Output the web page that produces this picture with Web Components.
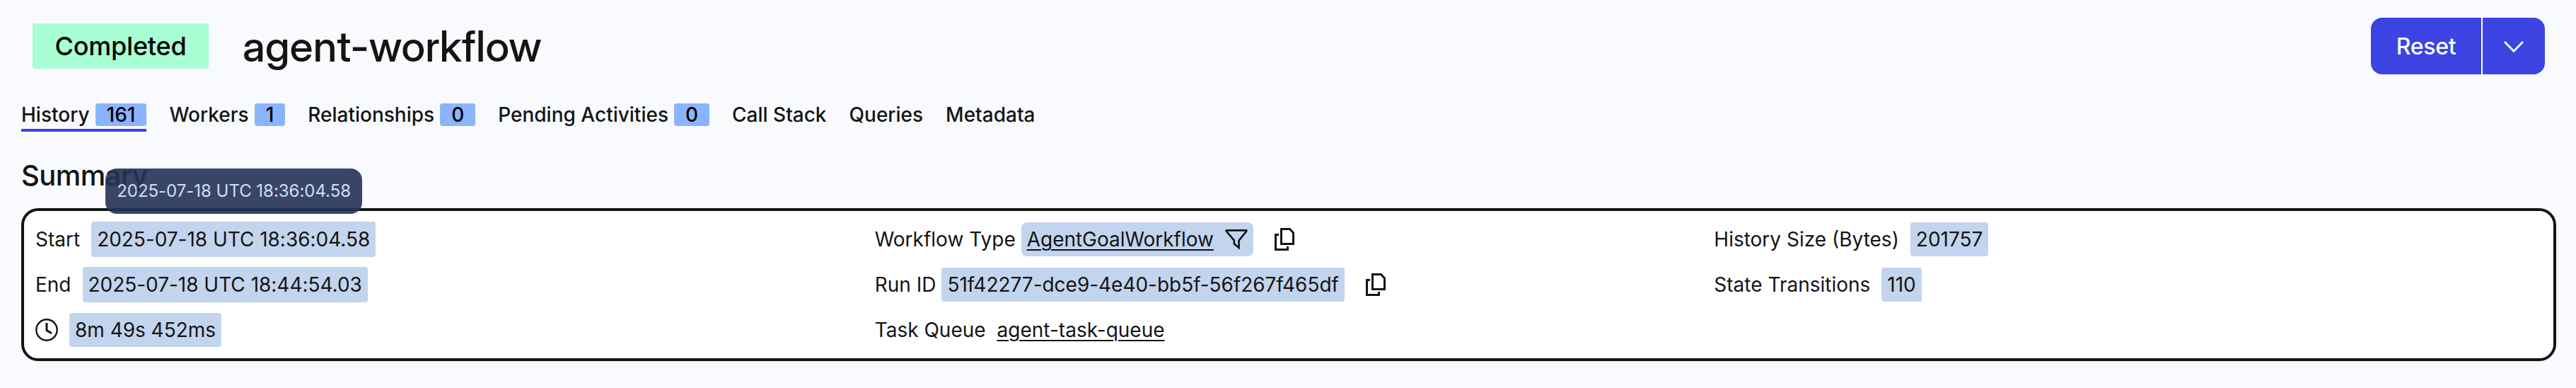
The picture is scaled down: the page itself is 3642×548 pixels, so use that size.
<!DOCTYPE html>
<html lang="en">
<head>
<meta charset="utf-8">
<title>agent-workflow</title>
<style>
html,body{margin:0;padding:0}
body{background:#f8fafd;width:3642px;height:548px;overflow:hidden;font-family:Inter,"Liberation Sans",sans-serif;color:#141414}
</style>
</head>
<body>
<workflow-page></workflow-page>
<script>
const define = (name, html) => {
  const tpl = document.createElement('template');
  tpl.innerHTML = html;
  customElements.define(name, class extends HTMLElement {
    constructor() {
      super();
      this.attachShadow({ mode: 'open' }).appendChild(tpl.content.cloneNode(true));
    }
  });
};

define('status-badge', `<style>
:host{display:flex;align-items:center;justify-content:center;box-sizing:border-box;width:249px;height:64px;border-radius:4px;background:#a7ffd3;color:#000;font-size:36px;font-weight:500;line-height:64px;letter-spacing:-.22px}
</style><slot></slot>`);

define('split-button', `<style>
:host{display:block;flex:none;height:80px;color:#fff;font-size:32px;font-weight:500;letter-spacing:-.3px}
.wrap{display:flex;gap:2px;background:linear-gradient(#fff,#fff) 156px 0/2px 100% no-repeat}
button{all:unset;box-sizing:border-box;display:flex;align-items:center;justify-content:center;background:#3c44e2;height:80px}
.main{width:156px;border-radius:16px 0 0 16px}
.more{width:88px;border-radius:0 16px 16px 0}
svg{display:block}
</style><div class="wrap"><button class="main"><slot></slot></button><button class="more" aria-label="More actions"><svg width="32" height="20" viewBox="0 0 32 20" fill="none" stroke="#fff" stroke-width="2.7"><path d="M3 4 16 17.3 29 4"/></svg></button></div>`);

define('count-badge', `<style>
:host{display:flex;align-items:center;justify-content:center;height:32px;border-radius:4px;background:#8ab4ff;color:#000;line-height:32px;padding:0 16px}
</style><slot></slot>`);

define('nav-tab', `<style>
:host{display:flex;align-items:center;gap:8px;box-sizing:border-box;height:40px;padding-bottom:4px;font-size:28px;font-weight:500;line-height:32px;border-bottom:4px solid transparent;white-space:nowrap}
:host([active]){border-bottom-color:#3c44e2}
</style><span><slot></slot></span><slot name="count"></slot>`);

define('copy-icon', `<style>:host{display:block;width:28px;height:32px}svg{display:block}</style>
<svg width="28" height="32" viewBox="0 0 28 32" fill="none" stroke="#141414" stroke-width="3"><path d="M9.5 1.5H21.5L26.5 6.8V22.5H9.5Z"/><path d="M6 9.5H1.5V30.5H18.5V26"/></svg>`);

define('filter-icon', `<style>:host{display:block;width:32px;height:32px}svg{display:block}</style>
<svg width="32" height="32" viewBox="0 0 32 32" fill="none" stroke="#141414" stroke-width="2.6"><path d="M1.8 3.4H30.2V4.6L19.6 17.6V28L12.9 22.3V17.6L1.8 4.6Z"/></svg>`);

define('clock-icon', `<style>:host{display:block;width:32px;height:32px}svg{display:block}</style>
<svg width="32" height="32" viewBox="0 0 32 32" fill="none" stroke="#141414" stroke-width="2.4"><circle cx="16" cy="16" r="14.7"/><path d="M16 6V16.6L23 20.8" stroke-width="3"/></svg>`);

define('value-chip', `<style>
:host{display:flex;align-items:center;box-sizing:border-box;height:var(--h,48px);padding:0 8px;border-radius:var(--r,4px);background:#c3d4ee;position:relative;letter-spacing:-.03px}
</style><slot></slot>`);

define('text-link', `<style>
:host{display:block}
a{color:inherit;text-decoration:underline;text-decoration-thickness:2px;text-underline-offset:4px;text-decoration-skip-ink:auto}
</style><a><slot></slot></a>`);

define('hover-tip', `<style>
:host{position:absolute;left:20px;bottom:calc(100% + 11px);box-sizing:border-box;width:363px;height:64px;display:flex;align-items:center;justify-content:center;border-radius:16px;background:#253256;color:#cbdcf9;opacity:.9;font-size:24px}
</style><slot></slot>`);

define('detail-row', `<style>
:host{display:flex;align-items:center;height:48px;gap:var(--gap,16px)}
</style><slot></slot>`);

define('summary-card', `<style>
:host{display:grid;grid-template-columns:repeat(3,1fr);gap:16px;box-sizing:border-box;height:216px;padding:16px;border:4px solid #141414;border-radius:24px;background:#fff;font-size:28px;line-height:40px;white-space:nowrap}
.col{display:flex;flex-direction:column;gap:16px;min-width:0}
</style><div class="col"><slot name="time"></slot></div><div class="col"><slot name="workflow"></slot></div><div class="col"><slot name="size"></slot></div>`);

define('workflow-page', `<style>
:host{display:flex;flex-direction:column;box-sizing:border-box;width:3642px;height:548px;padding:25px 28px 0 30px}
header{display:flex;align-items:center;height:80px;padding:0 16px}
h1{margin:0 auto 0 48px;font-family:"Inter Display",Inter,sans-serif;font-size:60px;line-height:80px;font-weight:500;letter-spacing:.25px}
nav{display:flex;gap:32px;height:40px;margin-top:41px}
h2{margin:36px 0 0;height:72px;font-size:40px;line-height:51px;font-weight:500;letter-spacing:-.55px}
</style>
<header><status-badge>Completed</status-badge><h1>agent-workflow</h1><split-button>Reset</split-button></header>
<nav>
<nav-tab active>History<count-badge slot="count">161</count-badge></nav-tab>
<nav-tab>Workers<count-badge slot="count">1</count-badge></nav-tab>
<nav-tab>Relationships<count-badge slot="count">0</count-badge></nav-tab>
<nav-tab>Pending Activities<count-badge slot="count">0</count-badge></nav-tab>
<nav-tab style="gap:0">Call Stack</nav-tab><nav-tab style="gap:0">Queries</nav-tab><nav-tab style="gap:0">Metadata</nav-tab>
</nav>
<h2>Summary</h2>
<summary-card>
<detail-row slot="time"><span>Start</span><value-chip style="--h:50px">2025-07-18 UTC 18:36:04.58<hover-tip>2025-07-18 UTC 18:36:04.58</hover-tip></value-chip></detail-row>
<detail-row slot="time"><span>End</span><value-chip style="--h:50px">2025-07-18 UTC 18:44:54.03</value-chip></detail-row>
<detail-row slot="time"><clock-icon></clock-icon><value-chip>8m 49s 452ms</value-chip></detail-row>
<detail-row slot="workflow" style="--gap:8px"><span>Workflow Type</span><value-chip style="--r:8px"><text-link>AgentGoalWorkflow</text-link><filter-icon style="margin-left:16px"></filter-icon></value-chip><copy-icon style="margin-left:22px"></copy-icon></detail-row>
<detail-row slot="workflow" style="--gap:8px"><span>Run ID</span><value-chip>51f42277-dce9-4e40-bb5f-56f267f465df</value-chip><copy-icon style="margin-left:22px"></copy-icon></detail-row>
<detail-row slot="workflow"><span>Task Queue</span><text-link>agent-task-queue</text-link></detail-row>
<detail-row slot="size"><span>History Size (Bytes)</span><value-chip>201757</value-chip></detail-row>
<detail-row slot="size"><span>State Transitions</span><value-chip>110</value-chip></detail-row>
</summary-card>`);
</script>
</body>
</html>
